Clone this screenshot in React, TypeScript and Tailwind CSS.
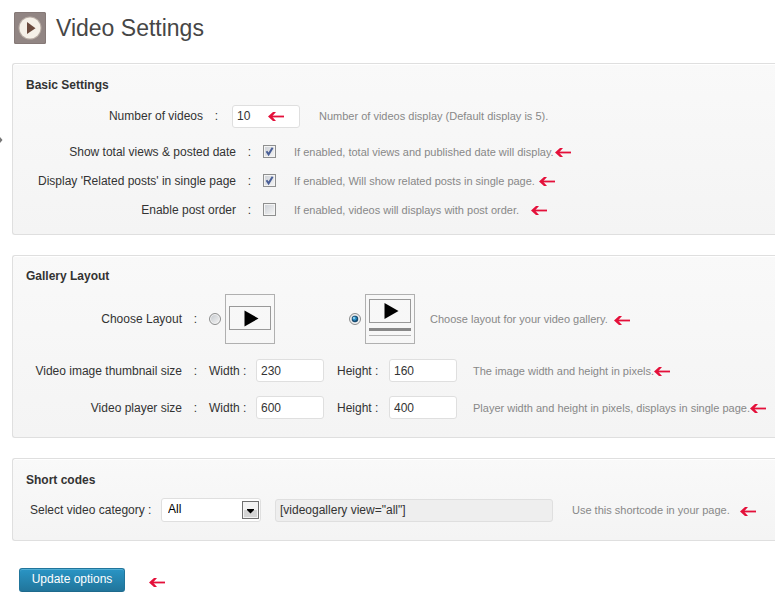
import { useState } from "react";
import type { ReactNode } from "react";

const fieldClass =
  "block h-[23px] rounded-[3px] border border-[#dfdfdf] px-1 text-xs text-[#333333] outline-none";

function Arrow({ className = "" }: { className?: string }) {
  return (
    <svg className={`h-[9px] w-4 shrink-0 ${className}`} viewBox="0 0 16 9" fill="none" aria-hidden="true">
      <path d="M16 4.5H2" stroke="#e4103a" strokeWidth="1.8" />
      <path d="M8 0L5 0L0 4.5L5 9L8 9L4 4.5Z" fill="#e4103a" />
    </svg>
  );
}

function Panel({ title, className, children }: { title: string; className: string; children: ReactNode }) {
  return (
    <section
      className={`rounded-l-[3px] border border-r-0 border-[#dfdfdf] bg-linear-to-b from-[#f9f9f9] to-[#f4f4f4] shadow-[inset_0_1px_0_#ffffff] ${className}`}
    >
      <h2 className="pl-[13px] text-xs leading-5 font-bold text-[#333333]">{title}</h2>
      {children}
    </section>
  );
}

function RowLabel({ htmlFor, width, children }: { htmlFor?: string; width: string; children: ReactNode }) {
  return (
    <>
      <label htmlFor={htmlFor} className={`shrink-0 text-right ${width}`}>
        {children}
      </label>
      <span className="w-[27px] shrink-0 text-center">:</span>
    </>
  );
}

function Hint({ gap, className = "", children }: { gap: string; className?: string; children: ReactNode }) {
  return (
    <p className={`flex shrink-0 items-center text-[11px] leading-4 whitespace-nowrap text-[#888888] ${gap} ${className}`}>
      {children}
      <Arrow className="mt-0.5" />
    </p>
  );
}

function CheckRow({
  id,
  label,
  hint,
  gap,
  initial,
}: {
  id: string;
  label: string;
  hint: string;
  gap: string;
  initial: boolean;
}) {
  const [on, setOn] = useState(initial);
  return (
    <div className="flex h-[29px] items-center">
      <RowLabel htmlFor={id} width="w-[223px]">
        {label}
      </RowLabel>
      <span className="relative size-[13px] shrink-0">
        <input
          id={id}
          type="checkbox"
          checked={on}
          onChange={(e) => setOn(e.target.checked)}
          className="block size-[13px] appearance-none border border-[#8e8f8f] bg-linear-to-br from-[#cbcfd5] to-[#f6f6f6] shadow-[inset_0_0_0_1px_#f4f4f4]"
        />
        {on && (
          <svg className="pointer-events-none absolute inset-0 size-[13px]" viewBox="0 0 13 13" fill="none" aria-hidden="true">
            <path d="M3.5 6.2L5.6 9.3L9.6 2.8" stroke="#4a5f97" strokeWidth="2" />
          </svg>
        )}
      </span>
      <Hint gap={gap} className="ml-[18px]">
        {hint}
      </Hint>
    </div>
  );
}

function LayoutOption({
  id,
  name,
  checked,
  onChange,
  children,
}: {
  id: string;
  name: string;
  checked: boolean;
  onChange: () => void;
  children: ReactNode;
}) {
  return (
    <div className="flex shrink-0 items-center gap-1">
      <span className="relative size-3 shrink-0">
        <input
          id={id}
          type="radio"
          name={name}
          checked={checked}
          onChange={onChange}
          className="block size-3 appearance-none rounded-full border border-[#8e8f8f] bg-linear-to-br from-[#c3c7cc] to-[#f6f6f6] shadow-[inset_0_0_0_1px_#f4f4f4]"
        />
        {checked && (
          <svg className="pointer-events-none absolute inset-0 size-3" viewBox="0 0 12 12" aria-hidden="true">
            <circle cx="6" cy="6" r="3.2" fill="#164a70" />
            <circle cx="5.6" cy="5.6" r="2.1" fill="#2f94cc" />
            <circle cx="5" cy="5" r="0.9" fill="#b7e4f7" />
          </svg>
        )}
      </span>
      <label htmlFor={id}>
        <svg className="block size-[50px]" viewBox="0 0 50 50" fill="none" aria-hidden="true">
          <rect x="0.5" y="0.5" width="49" height="49" stroke="#b0b0b0" />
          {children}
        </svg>
      </label>
    </div>
  );
}

function SizeRow({
  id,
  label,
  width,
  height,
  hint,
}: {
  id: string;
  label: string;
  width: string;
  height: string;
  hint: string;
}) {
  return (
    <div className="flex h-[37px] items-center">
      <RowLabel htmlFor={`${id}-width`} width="w-[169px]">
        {label}
      </RowLabel>
      <label htmlFor={`${id}-width`} className="w-[47px] shrink-0">
        Width :
      </label>
      <input id={`${id}-width`} type="text" defaultValue={width} className={`w-[68px] shrink-0 bg-white ${fieldClass}`} />
      <label htmlFor={`${id}-height`} className="ml-[13px] w-[52px] shrink-0">
        Height :
      </label>
      <input id={`${id}-height`} type="text" defaultValue={height} className={`w-[68px] shrink-0 bg-white ${fieldClass}`} />
      <Hint gap="gap-0" className="ml-4">
        {hint}
      </Hint>
    </div>
  );
}

export default function App() {
  const [layout, setLayout] = useState("stacked");

  return (
    <main className="relative min-h-screen overflow-hidden bg-white pl-3 font-['Liberation_Sans',Arial,sans-serif] text-xs leading-4 text-[#333333]">
      <svg className="absolute top-[136px] left-0 h-2 w-[3px]" viewBox="0 0 3 8" aria-hidden="true">
        <path d="M0 1L2.5 4L0 7Z" fill="#777777" />
      </svg>

      <header className="flex h-[63px] items-start gap-2.5 pt-3 pl-0.5">
        <svg className="size-8 shrink-0" viewBox="0 0 32 32" aria-hidden="true">
          <rect width="32" height="32" rx="1.5" fill="#918583" />
          <rect x="0.5" y="0.5" width="31" height="31" rx="1.5" fill="none" stroke="#857977" />
          <circle cx="16" cy="16" r="11.5" fill="#b9ada5" />
          <circle cx="16" cy="16" r="10.5" fill="#f5f0e8" />
          <path d="M13 10L21.5 16.3L13 22Z" fill="#6b4a3d" />
        </svg>
        <h1 className="text-[23px] leading-8 text-[#464646]">Video Settings</h1>
      </header>

      <form onSubmit={(e) => e.preventDefault()}>
        <div className="flex flex-col gap-5">
          <Panel title="Basic Settings" className="pt-[11px] pb-2.5">
            <div className="flex h-[42px] items-center">
              <RowLabel htmlFor="video-count" width="w-[190px]">
                Number of videos
              </RowLabel>
              <span className="relative ml-0.5 shrink-0">
                <input id="video-count" type="text" defaultValue="10" className={`w-[68px] bg-white ${fieldClass}`} />
                <Arrow className="pointer-events-none absolute top-[7px] left-9" />
              </span>
              <p className="ml-[19px] shrink-0 text-[11px] leading-4 text-[#888888]">
                Number of videos display (Default display is 5).
              </p>
            </div>
            <CheckRow
              id="show-views"
              label="Show total views & posted date"
              hint="If enabled, total views and published date will display."
              gap="gap-px"
              initial={true}
            />
            <CheckRow
              id="show-related"
              label="Display 'Related posts' in single page"
              hint="If enabled, Will show related posts in single page."
              gap="gap-1"
              initial={true}
            />
            <CheckRow
              id="post-order"
              label="Enable post order"
              hint="If enabled, videos will displays with post order."
              gap="gap-3"
              initial={false}
            />
          </Panel>

          <Panel title="Gallery Layout" className="pt-2.5 pb-[11px]">
            <div className="flex h-[66px] items-center">
              <RowLabel htmlFor="layout-single" width="w-[169px]">
                Choose Layout
              </RowLabel>
              <LayoutOption
                id="layout-single"
                name="layout"
                checked={layout === "single"}
                onChange={() => setLayout("single")}
              >
                <rect x="4.5" y="12.5" width="41" height="23" stroke="#999999" />
                <path d="M19.5 16.5L33.5 24.5L19.5 32.5Z" fill="#000000" />
              </LayoutOption>
              <div className="w-[74px] shrink-0" />
              <LayoutOption
                id="layout-stacked"
                name="layout"
                checked={layout === "stacked"}
                onChange={() => setLayout("stacked")}
              >
                <rect x="4.5" y="5.5" width="41" height="23" stroke="#999999" />
                <path d="M19.5 9L33.5 17L19.5 25Z" fill="#000000" />
                <rect x="4" y="34" width="42" height="3" fill="#888888" />
                <rect x="4" y="41" width="42" height="1" fill="#b5b5b5" />
              </LayoutOption>
              <Hint gap="gap-1.5" className="ml-[15px]">
                Choose layout for your video gallery.
              </Hint>
            </div>
            <SizeRow
              id="thumb"
              label="Video image thumbnail size"
              width="230"
              height="160"
              hint="The image width and height in pixels."
            />
            <SizeRow
              id="player"
              label="Video player size"
              width="600"
              height="400"
              hint="Player width and height in pixels, displays in single page."
            />
          </Panel>

          <Panel title="Short codes" className="pt-[11px] pb-2.5">
            <div className="flex h-10 items-center">
              <label htmlFor="category" className="ml-[17px] w-[131px] shrink-0">
                Select video category :
              </label>
              <span className="relative shrink-0">
                <select
                  id="category"
                  className="block h-6 w-[100px] appearance-none rounded-[3px] border border-[#dfdfdf] bg-white px-1.5 pb-0.5 text-xs text-black outline-none"
                >
                  <option>All</option>
                </select>
                <svg
                  className="pointer-events-none absolute top-[3px] right-0.5 h-[18px] w-[17px]"
                  viewBox="0 0 17 18"
                  aria-hidden="true"
                >
                  <rect x="0.5" y="0.5" width="16" height="17" fill="#f3f3f3" stroke="#707070" />
                  <rect x="2" y="9" width="13" height="7" fill="#d4d4d4" />
                  <path d="M5 8H12V9L8.5 12.5L5 9Z" fill="#000000" />
                </svg>
              </span>
              <input
                type="text"
                readOnly
                aria-label="Shortcode"
                defaultValue={'[videogallery view="all"]'}
                className={`ml-3.5 w-[278px] shrink-0 bg-[#eeeeee] ${fieldClass}`}
              />
              <Hint gap="gap-2.5" className="ml-[19px]">
                Use this shortcode in your page.
              </Hint>
            </div>
          </Panel>
        </div>

        <div className="mt-[27px] flex items-center gap-6 pl-[7px]">
          <button
            type="submit"
            className="h-6 w-[106px] rounded-[3px] border border-[#21759b] border-b-[#1e6a8d] bg-linear-to-b from-[#2a95c5] to-[#21759b] pb-0.5 text-xs text-white shadow-[inset_0_1px_0_rgba(120,200,230,0.5)]"
          >
            Update options
          </button>
          <Arrow className="mt-1" />
        </div>
      </form>
    </main>
  );
}
